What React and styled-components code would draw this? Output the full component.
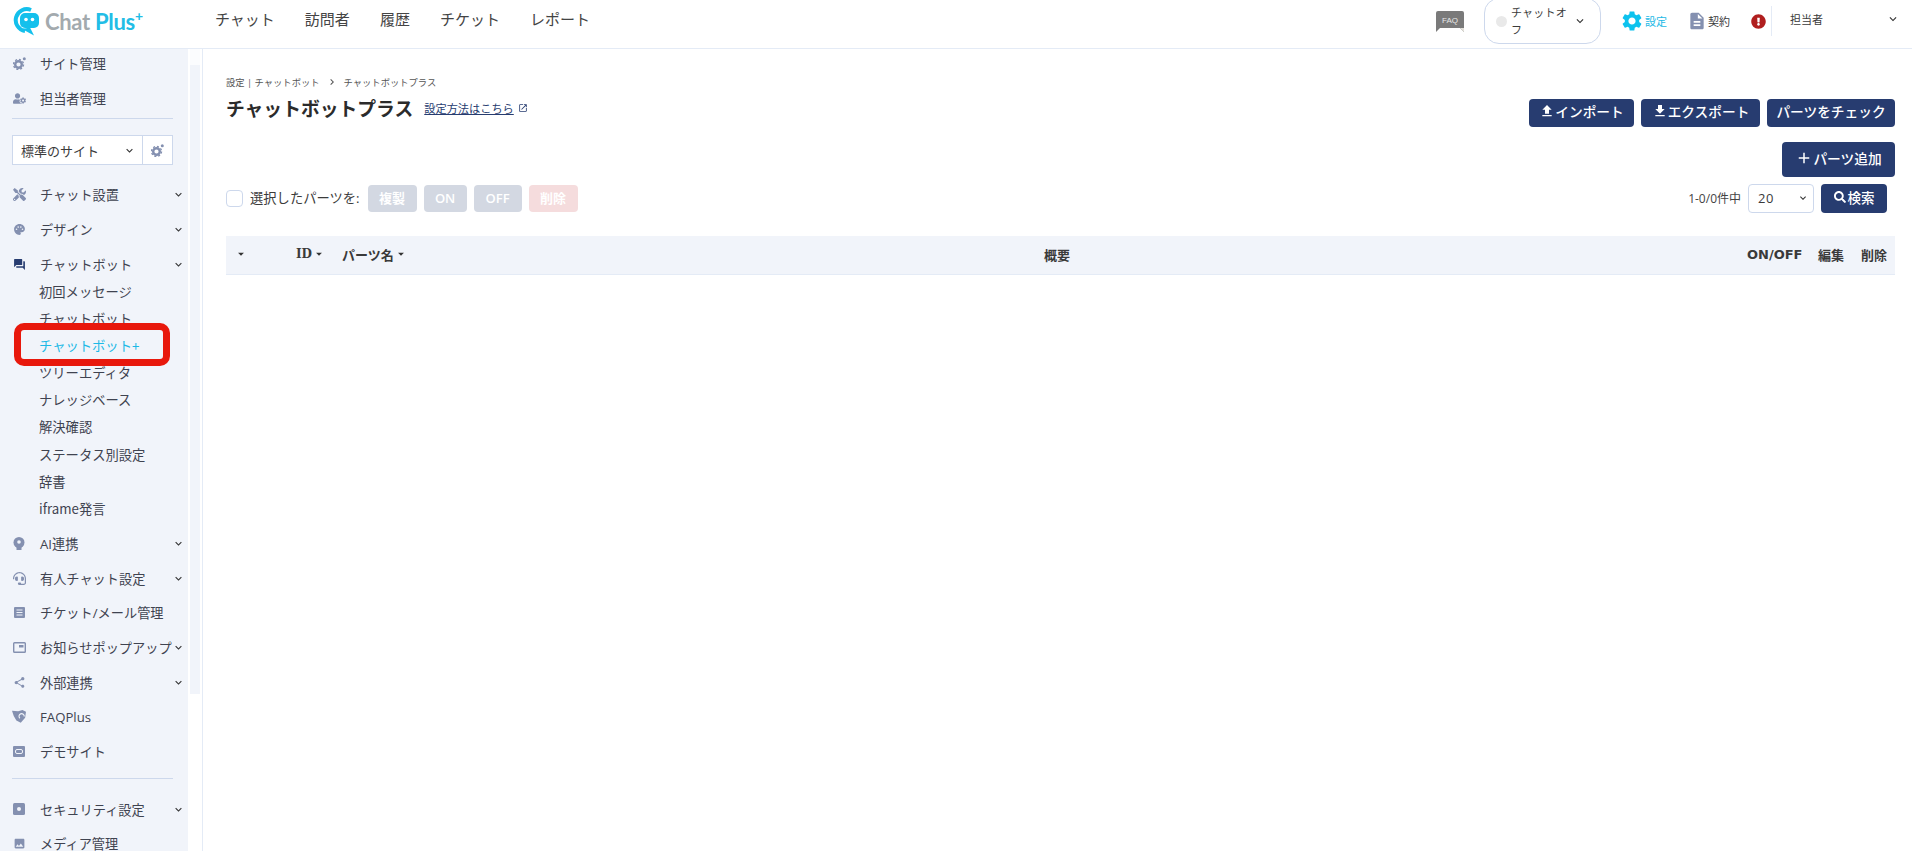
import styled, { createGlobalStyle } from "styled-components"
import {
  MdKeyboardArrowDown, MdSettings, MdDescription, MdFileUpload, MdFileDownload, MdOpenInNew,
  MdPalette, MdForum, MdShare, MdImage, MdAdd, MdArrowDropDown, MdChevronRight,
} from "react-icons/md"
import { FaUserCog, FaTools, FaHeadset, FaSearch, FaExclamationCircle } from "react-icons/fa"

const colors = {
  navy: "#273c70",
  cyan: "#0dc2ee",
  side: "#f1f4fa",
  line: "#cdd8ec",
  icon: "#8490b0",
  text: "#3b3b3b",
}

const fontStack = `"Open Sans", "Noto Sans CJK JP", sans-serif`

const GlobalStyle = createGlobalStyle`
  html, body { margin: 0; padding: 0; height: 100%; background: #fff; overflow: hidden; }
  body { font-family: ${fontStack}; color: ${colors.text}; }
  * { box-sizing: border-box; }
`

const Page = styled.div`
  display: flex;
  flex-direction: column;
  width: 1912px;
  height: 851px;
  overflow: hidden;
`

/* header */
const Header = styled.header`
  display: flex;
  align-items: center;
  height: 49px;
  flex-shrink: 0;
  padding: 0 0 6px 12px;
  border-bottom: 1px solid #e4ebf6;
`
const Logo = styled.div`
  display: flex;
  align-items: center;
  width: 203px;
  flex-shrink: 0;
`
const LogoWord = styled.span`
  font-family: "Lato", sans-serif;
  font-weight: 700;
  font-size: 22px;
  margin-left: 6px;
  color: #a3aaae;
  white-space: nowrap;
  letter-spacing: -0.3px;
`
const LogoPlus = styled.span`
  color: #22bde6;
`
const LogoSup = styled.sup`
  color: #22bde6;
  font-size: 14px;
  line-height: 0;
  vertical-align: 9px;
`
const Nav = styled.nav`
  display: flex;
  gap: 30px;
  font-size: 15px;
  margin-top: -5px;
`
const NavLink = styled.span`
  white-space: nowrap;
  color: #444;
`
const HeaderRight = styled.div`
  display: flex;
  align-items: center;
  margin-left: auto;
`
const FaqBadge = styled.svg`
  width: 28px;
  height: 21px;
  margin-right: 20px;
`
const StatusPill = styled.div`
  display: flex;
  align-items: center;
  width: 117px;
  height: 46px;
  margin-right: 19px;
  padding: 0 6px 0 11px;
  border: 1px solid ${colors.line};
  border-radius: 15px;
`
const StatusDot = styled.span`
  width: 11px;
  height: 11px;
  border-radius: 50%;
  background: #e9e9e9;
  flex-shrink: 0;
  margin-right: 4px;
`
const StatusText = styled.span`
  width: 62px;
  font-size: 11px;
  line-height: 17px;
  letter-spacing: 0.2px;
`
const Chevron = styled(MdKeyboardArrowDown)`
  flex-shrink: 0;
  color: ${(p) => p.$color || "#333"};
  font-size: ${(p) => p.$size || 14}px;
`
const HeaderLink = styled.div`
  display: flex;
  align-items: center;
  gap: 1px;
  font-size: 11px;
  margin-right: ${(p) => p.$gap}px;
  color: ${(p) => p.$color || colors.text};
`
const AlertIcon = styled(FaExclamationCircle)`
  color: #b01e1e;
  font-size: 15px;
  margin-right: 5px;
`
const UserMenu = styled.div`
  display: flex;
  align-items: center;
  justify-content: space-between;
  width: 141px;
  height: 30px;
  padding: 0 12px 4px 18px;
  border-left: 1px solid #e4ebf6;
  font-size: 11px;
`

/* body */
const Body = styled.div`
  display: flex;
  flex: 1;
  min-height: 0;
`
const Sidebar = styled.aside`
  position: relative;
  width: 188px;
  flex-shrink: 0;
  background: ${colors.side};
  overflow: hidden;
`
const SideInner = styled.div`
  margin-top: -3px;
`
const SideRow = styled.div`
  display: flex;
  align-items: center;
  height: 34.7px;
  padding-left: 12px;
  font-size: 13.2px;
  white-space: nowrap;
  color: #3f4350;
`
const SideIcon = styled.span`
  display: flex;
  justify-content: center;
  width: 14px;
  margin-right: 14px;
  font-size: 13px;
  color: ${(p) => (p.$active ? colors.navy : colors.icon)};
`
const SideLabel = styled.span`
  flex: 1;
  min-width: 0;
`
const SideChevron = styled(MdKeyboardArrowDown)`
  font-size: 13px;
  color: #333;
  margin-right: 3px;
  flex-shrink: 0;
`
const SideDivider = styled.hr`
  margin: ${(p) => p.$m};
  width: 161px;
  height: 1px;
  border: 0;
  background: ${colors.line};
`
const SiteSelect = styled.div`
  display: flex;
  width: 161px;
  height: 30px;
  margin: 0 0 12px 12px;
  background: #fff;
  border: 1px solid ${colors.line};
`
const SiteName = styled.div`
  display: flex;
  align-items: center;
  justify-content: space-between;
  flex: 1;
  padding: 0 6px 0 8px;
  font-size: 13px;
  border-right: 1px solid ${colors.line};
`
const SiteGear = styled.div`
  display: flex;
  align-items: center;
  justify-content: center;
  width: 29px;
`
const SubList = styled.div`
  margin: -4px 0 4px;
`
const SubItem = styled.div`
  display: flex;
  align-items: center;
  height: 27.2px;
  padding-left: 39px;
  font-family: "Noto Sans CJK JP", sans-serif;
  font-size: 13.3px;
  color: ${(p) => (p.$active ? "#1cb9e6" : "#3f4350")};
`
const Highlight = styled.div`
  position: absolute;
  left: 14px;
  top: 274px;
  width: 156px;
  height: 43px;
  border: 7px solid #e8180c;
  border-radius: 10px;
`
const ScrollTrack = styled.div`
  width: 10px;
  height: 645px;
  margin: 0 2px;
  flex-shrink: 0;
  background: linear-gradient(#fbfcfe 0 16px, ${colors.side} 16px);
`

/* main */
const Main = styled.main`
  flex: 1;
  min-width: 0;
  border-left: 1px solid #e4ebf6;
  padding: 26px 17px 0 23px;
`
const Head = styled.div`
  display: flex;
  justify-content: space-between;
  height: 67px;
`
const Breadcrumb = styled.div`
  display: flex;
  align-items: center;
  height: 14px;
  font-size: 9.3px;
  color: #555;
`
const CrumbArrow = styled(MdChevronRight)`
  font-size: 12px;
  margin: 0 6px;
`
const TitleRow = styled.div`
  display: flex;
  align-items: center;
  margin-top: 5px;
`
const Title = styled.h1`
  margin: 0 11px 0 0;
  font-size: 18.8px;
  line-height: 30px;
  font-weight: 700;
  color: #2b2b2b;
`
const HelpLink = styled.a`
  font-size: 11.2px;
  color: ${colors.navy};
  text-decoration: underline;
  margin-top: -3px;
`
const HelpIcon = styled(MdOpenInNew)`
  font-size: 10px;
  margin: -3px 0 0 4px;
  color: ${colors.navy};
`
const Actions = styled.div`
  display: flex;
  gap: 7px;
  margin-top: 24px;
`
const NavyButton = styled.button`
  display: inline-flex;
  align-items: center;
  justify-content: center;
  width: ${(p) => p.$w}px;
  height: ${(p) => p.$h}px;
  padding: 0 0 4px;
  border: 0;
  border-radius: 4px;
  background: ${colors.navy};
  color: #fff;
  font-family: ${fontStack};
  font-size: ${(p) => p.$fs || 13.7}px;
  font-weight: 500;
  white-space: nowrap;
`
const AddRow = styled.div`
  display: flex;
  justify-content: flex-end;
  margin-bottom: 7px;
`
const Toolbar = styled.div`
  display: flex;
  align-items: center;
  justify-content: space-between;
  height: 29px;
  margin-bottom: 23px;
  padding-right: 8px;
`
const Group = styled.div`
  display: flex;
  align-items: center;
`
const Checkbox = styled.span`
  width: 17px;
  height: 17px;
  margin-right: 7px;
  border: 1px solid ${colors.line};
  border-radius: 4px;
  background: #fff;
`
const SelectLabel = styled.span`
  font-size: 13.3px;
  margin: -2px 8px 0 0;
  white-space: nowrap;
`
const MutedButton = styled.button`
  width: ${(p) => p.$w}px;
  height: 27px;
  margin-right: 7px;
  padding: 0 0 2px;
  border: 0;
  border-radius: 4px;
  background: ${(p) => (p.$danger ? "#f5dcdd" : "#d3d8e2")};
  color: #fff;
  font-family: ${fontStack};
  font-size: 13px;
  font-weight: 600;
`
const Count = styled.span`
  font-size: 12px;
  margin: -2px 7px 0 0;
  color: #444;
`
const PerPage = styled.div`
  display: flex;
  align-items: center;
  justify-content: space-between;
  width: 66px;
  height: 29px;
  margin-right: 7px;
  padding: 0 4px 2px 9px;
  border: 1px solid ${colors.line};
  border-radius: 4px;
  font-size: 13px;
  letter-spacing: 0.5px;
`
const TableHead = styled.div`
  display: grid;
  grid-template-columns: 70px 46px 702px 703px 71px 43px 34px;
  align-items: center;
  height: 39px;
  padding-bottom: 2px;
  background: ${colors.side};
  border-bottom: 1px solid #e4ebf6;
  font-weight: 700;
  color: #3a3a3a;
`
const HeadCell = styled.span`
  display: flex;
  align-items: center;
  white-space: nowrap;
  font-family: ${(p) => (p.$serif ? `"DejaVu Serif", serif` : `"DejaVu Sans", "Noto Sans CJK JP", sans-serif`)};
  font-size: ${(p) => (p.$serif ? 12 : 13)}px;
  padding-left: ${(p) => p.$pad || 0}px;
`
const SortCaret = styled(MdArrowDropDown)`
  font-size: 14px;
  color: #333;
`
const InlineIcon = styled.span`
  display: inline-flex;
  font-size: ${(p) => p.$size || 16}px;
  margin-right: ${(p) => p.$mr || 0}px;
  color: ${(p) => p.$color || "inherit"};
`

const ChatLogoMark = () => (
  <svg width="27" height="30" viewBox="0 0 27 30">
    <path d="M19 4A11 11 0 1 0 13 25" fill="none" stroke="#14c0ec" strokeWidth="4" />
    <path d="M10 23l12 6.500-4-8z" fill="#14c0ec" />
    <rect x="8" y="7" width="19" height="15" rx="5" fill="#14c0ec" />
    <circle cx="14" cy="13.500" r="1.800" fill="#fff" />
    <circle cx="20.500" cy="13.500" r="1.800" fill="#fff" />
  </svg>
)

const FaqIcon = () => (
  <FaqBadge viewBox="0 0 28 21">
    <path d="M2 0h24a2 2 0 0 1 2 2v19l-4-4H0l0-15a2 2 0 0 1 2-2z" fill="#7a7a7a" />
    <path d="M0 17v4l4-4z" fill="#7a7a7a" />
    <path d="M24 17l4 4v-4z" fill="#e4e1da" />
    <text x="14" y="11.5" textAnchor="middle" fontSize="8" fontFamily="Liberation Sans" fill="#e8e8e8">FAQ</text>
  </FaqBadge>
)

const GearDotIcon = () => (
  <svg width="13" height="13" viewBox="0 0 13 13">
    <circle cx="5.500" cy="7.500" r="3.300" fill="none" stroke="#8490b0" strokeWidth="2.400" />
    <circle cx="5.500" cy="7.500" r="5" fill="none" stroke="#8490b0" strokeWidth="1.400" strokeDasharray="2 1.900" />
    <circle cx="11.300" cy="1.800" r="1.500" fill="#8490b0" />
  </svg>
)

const AiIcon = () => (
  <svg width="12" height="13" viewBox="0 0 12 13">
    <circle cx="6" cy="5.500" r="5.500" fill="#8490b0" />
    <rect x="3.500" y="9" width="5" height="4" fill="#8490b0" />
    <circle cx="6" cy="5" r="1.800" fill="#f1f4fa" />
  </svg>
)

const TicketIcon = () => (
  <svg width="11" height="11" viewBox="0 0 11 11">
    <rect width="11" height="11" rx="1" fill="#8490b0" />
    <path d="M2.500 3h6M2.500 5.500h6M2.500 8h6" stroke="#f1f4fa" strokeWidth="1" />
  </svg>
)

const PopupIcon = () => (
  <svg width="13" height="11" viewBox="0 0 13 11">
    <rect x="0.700" y="0.700" width="11.600" height="9.600" rx="0.800" fill="none" stroke="#8490b0" strokeWidth="1.400" />
    <rect x="6" y="3" width="4.500" height="2.500" fill="#8490b0" />
  </svg>
)

const DemoIcon = () => (
  <svg width="12" height="11" viewBox="0 0 12 11">
    <rect width="12" height="11" rx="1" fill="#8490b0" />
    <rect x="2.500" y="3.500" width="7" height="4" rx="1.500" fill="none" stroke="#f1f4fa" strokeWidth="1" />
  </svg>
)

const FaqPlusIcon = () => (
  <svg width="16" height="15" viewBox="0 0 16 15">
    <path d="M0 1l7 .5L12 0l4 2-1 7-5 5.500-5-2.500L2 7z" fill="#8490b0" />
    <path d="M9 9.500a3 3 0 1 1 5-2" fill="none" stroke="#f1f4fa" strokeWidth="1.300" />
  </svg>
)

const SecurityIcon = () => (
  <svg width="12" height="12" viewBox="0 0 12 12">
    <rect width="12" height="12" rx="1.500" fill="#8490b0" />
    <circle cx="6" cy="6" r="2" fill="#f1f4fa" />
  </svg>
)

const topItems = [
  { label: "チャット設置", icon: <FaTools />, more: true },
  { label: "デザイン", icon: <MdPalette />, more: true },
  { label: "チャットボット", icon: <MdForum />, more: true, active: true },
]
const subItems = ["初回メッセージ", "チャットボット", "チャットボット+", "ツリーエディタ", "ナレッジベース", "解決確認", "ステータス別設定", "辞書", "iframe発言"]
const lowerItems = [
  { label: "AI連携", icon: <AiIcon />, more: true },
  { label: "有人チャット設定", icon: <FaHeadset />, more: true },
  { label: "チケット/メール管理", icon: <TicketIcon />, more: false },
  { label: "お知らせポップアップ", icon: <PopupIcon />, more: true },
  { label: "外部連携", icon: <MdShare />, more: true },
  { label: "FAQPlus", icon: <FaqPlusIcon />, more: false },
  { label: "デモサイト", icon: <DemoIcon />, more: false },
]

const SideItem = ({ label, icon, more, active }) => (
  <SideRow>
    <SideIcon $active={active}>{icon}</SideIcon>
    <SideLabel>{label}</SideLabel>
    {more && <SideChevron />}
  </SideRow>
)

export default function App() {
  return (
    <Page>
      <GlobalStyle />
      <Header>
        <Logo>
          <ChatLogoMark />
          <LogoWord>Chat <LogoPlus>Plus</LogoPlus><LogoSup>+</LogoSup></LogoWord>
        </Logo>
        <Nav>
          {["チャット", "訪問者", "履歴", "チケット", "レポート"].map((n) => <NavLink key={n}>{n}</NavLink>)}
        </Nav>
        <HeaderRight>
          <FaqIcon />
          <StatusPill>
            <StatusDot />
            <StatusText>チャットオフ</StatusText>
            <Chevron $size={14} />
          </StatusPill>
          <HeaderLink $gap={20} $color="#1cb9e6">
            <InlineIcon $size={24} $color={colors.cyan}><MdSettings /></InlineIcon>設定
          </HeaderLink>
          <HeaderLink $gap={21}>
            <InlineIcon $size={20} $color={colors.icon}><MdDescription /></InlineIcon>契約
          </HeaderLink>
          <AlertIcon />
          <UserMenu>
            <span>担当者</span>
            <Chevron $size={14} />
          </UserMenu>
        </HeaderRight>
      </Header>
      <Body>
        <Sidebar>
          <SideInner>
            <SideItem label="サイト管理" icon={<GearDotIcon />} />
            <SideItem label="担当者管理" icon={<FaUserCog />} />
            <SideDivider $m="3px 0 16px 12px" />
            <SiteSelect>
              <SiteName>標準のサイト<Chevron $size={13} /></SiteName>
              <SiteGear><GearDotIcon /></SiteGear>
            </SiteSelect>
            {topItems.map((i) => <SideItem key={i.label} {...i} />)}
            <SubList>
              {subItems.map((s) => <SubItem key={s} $active={s === "チャットボット+"}>{s}</SubItem>)}
            </SubList>
            {lowerItems.map((i) => <SideItem key={i.label} {...i} />)}
            <SideDivider $m="9px 0 13px 12px" />
            <SideItem label="セキュリティ設定" icon={<SecurityIcon />} more />
            <SideItem label="メディア管理" icon={<MdImage />} />
          </SideInner>
          <Highlight />
        </Sidebar>
        <ScrollTrack />
        <Main>
          <Head>
            <div>
              <Breadcrumb>設定 | チャットボット<CrumbArrow />チャットボットプラス</Breadcrumb>
              <TitleRow>
                <Title>チャットボットプラス</Title>
                <HelpLink>設定方法はこちら</HelpLink>
                <HelpIcon />
              </TitleRow>
            </div>
            <Actions>
              <NavyButton $w={105} $h={28}><InlineIcon><MdFileUpload /></InlineIcon>インポート</NavyButton>
              <NavyButton $w={119} $h={28}><InlineIcon><MdFileDownload /></InlineIcon>エクスポート</NavyButton>
              <NavyButton $w={128} $h={28}>パーツをチェック</NavyButton>
            </Actions>
          </Head>
          <AddRow>
            <NavyButton $w={113} $h={35}><InlineIcon $size={18}><MdAdd /></InlineIcon>パーツ追加</NavyButton>
          </AddRow>
          <Toolbar>
            <Group>
              <Checkbox />
              <SelectLabel>選択したパーツを:</SelectLabel>
              <MutedButton $w={49}>複製</MutedButton>
              <MutedButton $w={43}>ON</MutedButton>
              <MutedButton $w={48}>OFF</MutedButton>
              <MutedButton $w={49} $danger>削除</MutedButton>
            </Group>
            <Group>
              <Count>1-0/0件中</Count>
              <PerPage>20<Chevron $size={12} /></PerPage>
              <NavyButton $w={66} $h={29} $fs={13.5}><InlineIcon $size={12} $mr={2}><FaSearch /></InlineIcon>検索</NavyButton>
            </Group>
          </Toolbar>
          <TableHead>
            <HeadCell $pad={8}><SortCaret /></HeadCell>
            <HeadCell $serif>ID<SortCaret /></HeadCell>
            <HeadCell>パーツ名<SortCaret /></HeadCell>
            <HeadCell>概要</HeadCell>
            <HeadCell>ON/OFF</HeadCell>
            <HeadCell>編集</HeadCell>
            <HeadCell>削除</HeadCell>
          </TableHead>
        </Main>
      </Body>
    </Page>
  )
}
